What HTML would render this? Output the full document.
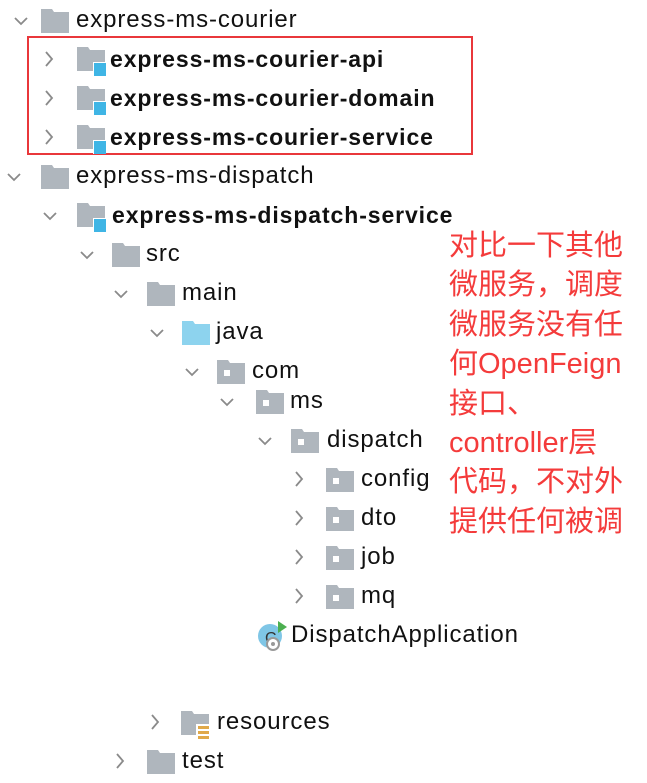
<!DOCTYPE html>
<html><head><meta charset="utf-8"><style>
body{margin:0;width:647px;height:783px;background:#fff;position:relative;overflow:hidden;font-family:"Liberation Sans","Noto Sans CJK SC",sans-serif;}
.t{position:absolute;font-size:24px;letter-spacing:0.9px;color:#111;white-space:nowrap;line-height:30px;top:-1px;}
.b{font-weight:bold;font-size:23px;letter-spacing:0.9px;}
svg{position:absolute;}
.red{position:absolute;left:449px;top:227px;color:#f43b3b;font-size:29px;line-height:39.4px;font-family:"Liberation Sans","Noto Sans CJK SC",sans-serif;white-space:nowrap;}
</style></head><body>
<svg width="0" height="0" style="position:absolute">
<defs>
<symbol id="down" viewBox="0 0 14 10"><path d="M1 2 L7 8 L13 2" fill="none" stroke="#8a8a8a" stroke-width="1.8"/></symbol>
<symbol id="right" viewBox="0 0 10 16"><path d="M2 1 L8 8 L2 15" fill="none" stroke="#8a8a8a" stroke-width="1.8"/></symbol>
<symbol id="fold" viewBox="0 0 28 24"><path d="M0 0 H11 L13 3 H28 V24 H0 Z" fill="#afb6bd"/></symbol>
<symbol id="pkg" viewBox="0 0 28 24"><path d="M0 0 H11 L13 3 H28 V24 H0 Z" fill="#afb6bd"/><rect x="7" y="10" width="6" height="6" fill="#fff"/></symbol>
<symbol id="java" viewBox="0 0 28 24"><path d="M0 0 H11 L13 3 H28 V24 H0 Z" fill="#8dd3ee"/></symbol>
<symbol id="mod" viewBox="0 0 30 30"><path d="M0 0 H11 L13 3 H28 V24 H0 Z" fill="#afb6bd"/><rect x="16" y="15" width="13" height="14" fill="#fff"/><rect x="17" y="16" width="12" height="13" fill="#3fb5e5"/></symbol>
<symbol id="res" viewBox="0 0 30 30"><path d="M0 0 H11 L13 3 H28 V24 H0 Z" fill="#afb6bd"/><rect x="15" y="13" width="14" height="16" fill="#fff"/><rect x="17" y="15" width="11" height="3" fill="#e0a94a"/><rect x="17" y="20" width="11" height="3" fill="#e0a94a"/><rect x="17" y="25" width="11" height="3" fill="#e0a94a"/></symbol>
</defs></svg>

<svg style="left:14px;top:16px" width="14" height="10"><use href="#down"/></svg>
<svg style="left:41px;top:9px" width="28" height="24"><use href="#fold"/></svg>
<div class="t" style="left:76px;top:5px">express-ms-courier</div>

<div style="position:absolute;left:27px;top:36px;width:442px;height:115px;border:2px solid #e9373b;"></div>

<svg style="left:44px;top:51px" width="10" height="16"><use href="#right"/></svg>
<svg style="left:77px;top:47px" width="30" height="30"><use href="#mod"/></svg>
<div class="t b" style="left:110px;top:44px">express-ms-courier-api</div>

<svg style="left:44px;top:90px" width="10" height="16"><use href="#right"/></svg>
<svg style="left:77px;top:86px" width="30" height="30"><use href="#mod"/></svg>
<div class="t b" style="left:110px;top:83px">express-ms-courier-domain</div>

<svg style="left:44px;top:129px" width="10" height="16"><use href="#right"/></svg>
<svg style="left:77px;top:125px" width="30" height="30"><use href="#mod"/></svg>
<div class="t b" style="left:110px;top:122px">express-ms-courier-service</div>

<svg style="left:7px;top:172px" width="14" height="10"><use href="#down"/></svg>
<svg style="left:41px;top:165px" width="28" height="24"><use href="#fold"/></svg>
<div class="t" style="left:76px;top:161px">express-ms-dispatch</div>

<svg style="left:43px;top:211px" width="14" height="10"><use href="#down"/></svg>
<svg style="left:77px;top:203px" width="30" height="30"><use href="#mod"/></svg>
<div class="t b" style="left:112px;top:200px">express-ms-dispatch-service</div>

<svg style="left:80px;top:250px" width="14" height="10"><use href="#down"/></svg>
<svg style="left:112px;top:243px" width="28" height="24"><use href="#fold"/></svg>
<div class="t" style="left:146px;top:239px">src</div>

<svg style="left:114px;top:289px" width="14" height="10"><use href="#down"/></svg>
<svg style="left:147px;top:282px" width="28" height="24"><use href="#fold"/></svg>
<div class="t" style="left:182px;top:278px">main</div>

<svg style="left:150px;top:328px" width="14" height="10"><use href="#down"/></svg>
<svg style="left:182px;top:321px" width="28" height="24"><use href="#java"/></svg>
<div class="t" style="left:216px;top:317px">java</div>

<svg style="left:185px;top:367px" width="14" height="10"><use href="#down"/></svg>
<svg style="left:217px;top:360px" width="28" height="24"><use href="#pkg"/></svg>
<div class="t" style="left:252px;top:356px">com</div>

<svg style="left:220px;top:397px" width="14" height="10"><use href="#down"/></svg>
<svg style="left:256px;top:390px" width="28" height="24"><use href="#pkg"/></svg>
<div class="t" style="left:290px;top:386px">ms</div>

<svg style="left:258px;top:436px" width="14" height="10"><use href="#down"/></svg>
<svg style="left:291px;top:429px" width="28" height="24"><use href="#pkg"/></svg>
<div class="t" style="left:327px;top:425px">dispatch</div>

<svg style="left:294px;top:471px" width="10" height="16"><use href="#right"/></svg>
<svg style="left:326px;top:468px" width="28" height="24"><use href="#pkg"/></svg>
<div class="t" style="left:361px;top:464px">config</div>

<svg style="left:294px;top:510px" width="10" height="16"><use href="#right"/></svg>
<svg style="left:326px;top:507px" width="28" height="24"><use href="#pkg"/></svg>
<div class="t" style="left:361px;top:503px">dto</div>

<svg style="left:294px;top:549px" width="10" height="16"><use href="#right"/></svg>
<svg style="left:326px;top:546px" width="28" height="24"><use href="#pkg"/></svg>
<div class="t" style="left:361px;top:542px">job</div>

<svg style="left:294px;top:588px" width="10" height="16"><use href="#right"/></svg>
<svg style="left:326px;top:585px" width="28" height="24"><use href="#pkg"/></svg>
<div class="t" style="left:361px;top:581px">mq</div>

<svg style="left:256px;top:619px" width="34" height="34" viewBox="0 0 34 34">
<circle cx="14" cy="17" r="12" fill="#7fc6e6"/>
<text x="9" y="24" font-size="16" font-family="Liberation Sans" fill="#333">C</text>
<path d="M22 2 L31 8 L22 14 Z" fill="#4caf50"/>
<circle cx="17" cy="25" r="6" fill="#fff" stroke="#999" stroke-width="2"/>
<circle cx="17" cy="25" r="2" fill="#999"/>
</svg>
<div class="t" style="left:291px;top:620px">DispatchApplication</div>

<svg style="left:150px;top:714px" width="10" height="16"><use href="#right"/></svg>
<svg style="left:181px;top:711px" width="30" height="30"><use href="#res"/></svg>
<div class="t" style="left:217px;top:707px">resources</div>

<svg style="left:115px;top:753px" width="10" height="16"><use href="#right"/></svg>
<svg style="left:147px;top:750px" width="28" height="24"><use href="#fold"/></svg>
<div class="t" style="left:182px;top:746px">test</div>

<div class="red">对比一下其他<br>微服务，调度<br>微服务没有任<br>何OpenFeign<br>接口、<br>controller层<br>代码，不对外<br>提供任何被调</div>
</body></html>
